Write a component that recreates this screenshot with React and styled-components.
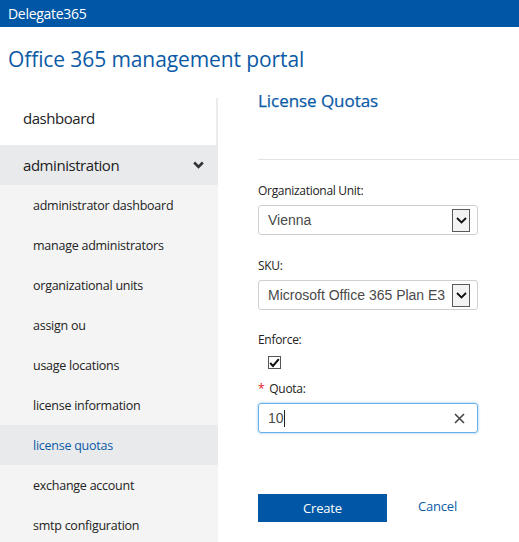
import React from "react";
import styled, { createGlobalStyle } from "styled-components";

const Global = createGlobalStyle`
  html, body { margin: 0; padding: 0; background: #fff; }
  body { font-family: "Open Sans", "Noto Sans", sans-serif; color: #222; }
  * { box-sizing: border-box; }
`;

const Page = styled.div`
  width: 519px;
  height: 542px;
  overflow: hidden;
  background: #fff;
`;

const TopBar = styled.div`
  height: 27px;
  background: #0057a5;
  color: #fff;
  display: flex;
  align-items: center;
  padding-left: 8px;
  font-size: 14px;
  letter-spacing: -0.3px;
`;

const TitleBar = styled.div`
  height: 61px;
  display: flex;
  align-items: flex-start;
  padding: 17px 0 0 8px;
`;

const Title = styled.h1`
  margin: 0;
  font-weight: 400;
  font-size: 21px;
  line-height: 30px;
  color: #0b5aa6;
  letter-spacing: -0.1px;
`;

const Main = styled.div`
  display: flex;
  align-items: flex-start;
`;

const Sidebar = styled.nav`
  width: 218px;
  margin-top: 10px;
  flex-shrink: 0;
`;

const TopItem = styled.div`
  height: ${(p) => p.$h}px;
  display: flex;
  align-items: center;
  justify-content: space-between;
  padding: 0 14px ${(p) => p.$pb || 0}px 23px;
  font-size: 15px;
  letter-spacing: -0.45px;
  color: #222;
  background: ${(p) => (p.$open ? "#e9eaec" : "#fff")};
  border-right: ${(p) => (p.$open ? "none" : "2px solid #ececec")};
`;

const SubItem = styled.div`
  height: 40px;
  display: flex;
  align-items: center;
  padding-left: 33px;
  font-size: 12.5px;
  letter-spacing: -0.25px;
  color: ${(p) => (p.$active ? "#0b5aa6" : "#222")};
  background: ${(p) => (p.$active ? "#e9eaec" : "#f4f4f4")};
`;

const Content = styled.section`
  flex: 1;
  padding-left: 40px;
  display: flex;
  flex-direction: column;
`;

const Heading = styled.h2`
  margin: 0;
  font-size: 17px;
  font-weight: 400;
  line-height: 26px;
  color: #0b5aa6;
  letter-spacing: -0.05px;
  -webkit-text-stroke: 0.25px #0b5aa6;
`;

const Rule = styled.hr`
  border: 0;
  border-top: 1px solid #e3e3e3;
  margin: 45px 0 0 0;
  height: 0;
`;

const Field = styled.div`
  display: flex;
  flex-direction: column;
  margin-top: ${(p) => p.$mt}px;
`;

const Label = styled.label`
  font-size: 12px;
  line-height: 17px;
  color: #222;
  letter-spacing: -0.3px;
`;

const Req = styled.span`
  color: #e02020;
  margin-right: 5px;
`;

const Box = styled.div`
  margin-top: ${(p) => p.$mt ?? 6}px;
  width: 220px;
  height: 30px;
  border: 1px solid ${(p) => (p.$focus ? "#66afe9" : "#cfcfcf")};
  border-radius: 3px;
  box-shadow: ${(p) => (p.$focus ? "0 0 3px rgba(102,175,233,.7)" : "none")};
  display: flex;
  align-items: center;
  padding: 0 7px 0 9px;
  font-family: "Liberation Sans", Arial, sans-serif;
  font-size: 14px;
  color: #4a4a4a;
`;

const BoxText = styled.span`
  flex: 1;
  white-space: nowrap;
  overflow: hidden;
`;

const Caret = styled.span`
  display: inline-block;
  width: 1px;
  height: 17px;
  background: #222;
  vertical-align: -4px;
`;

const Arrow = styled.span`
  width: 18px;
  height: 23px;
  border: 1px solid #5a5a5a;
  background: #f3f3f3;
  display: flex;
  align-items: center;
  justify-content: center;
  margin-left: 6px;
  flex-shrink: 0;
`;

const Clear = styled.span`
  width: 12px;
  display: flex;
  margin-right: 4px;
`;

const Check = styled.span`
  margin: 8px 0 0 10px;
  width: 13px;
  height: 13px;
  border: 1px solid #555;
  display: flex;
  align-items: center;
  justify-content: center;
  background: #fff;
`;

const Actions = styled.div`
  margin-top: 61px;
  display: flex;
  align-items: center;
`;

const Primary = styled.button`
  width: 129px;
  height: 28px;
  border: 0;
  background: #0057a5;
  color: #fff;
  font-family: "Open Sans", sans-serif;
  font-size: 13px;
  letter-spacing: -0.2px;
  padding: 0;
`;

const LinkBtn = styled.a`
  margin-left: 31px;
  font-size: 13px;
  color: #0b5aa6;
  letter-spacing: -0.2px;
  margin-top: -5px;
`;

const Chevron = () => (
  <svg width="11" height="8" viewBox="0 0 11 8">
    <path d="M1.2 1.5 L5.5 5.8 L9.8 1.5" fill="none" stroke="#333" strokeWidth="2.6" />
  </svg>
);

const SelectArrow = () => (
  <svg width="11" height="7" viewBox="0 0 11 7">
    <path d="M1 1 L5.5 5.5 L10 1" fill="none" stroke="#111" strokeWidth="1.8" />
  </svg>
);

const subs = [
  "administrator dashboard",
  "manage administrators",
  "organizational units",
  "assign ou",
  "usage locations",
  "license information",
  "license quotas",
  "exchange account",
  "smtp configuration",
];

export default function App() {
  return (
    <Page>
      <Global />
      <TopBar>Delegate365</TopBar>
      <TitleBar>
        <Title>Office 365 management portal</Title>
      </TitleBar>
      <Main>
        <Sidebar>
          <TopItem $h={47} $pb={7}>dashboard</TopItem>
          <TopItem $h={40} $open>
            administration
            <Chevron />
          </TopItem>
          {subs.map((s) => (
            <SubItem key={s} $active={s === "license quotas"}>
              {s}
            </SubItem>
          ))}
        </Sidebar>
        <Content>
          <Heading>License Quotas</Heading>
          <Rule />
          <Field $mt={22}>
            <Label>Organizational Unit:</Label>
            <Box>
              <BoxText>Vienna</BoxText>
              <Arrow>
                <SelectArrow />
              </Arrow>
            </Box>
          </Field>
          <Field $mt={22}>
            <Label>SKU:</Label>
            <Box>
              <BoxText>Microsoft Office 365 Plan E3</BoxText>
              <Arrow>
                <SelectArrow />
              </Arrow>
            </Box>
          </Field>
          <Field $mt={21}>
            <Label>Enforce:</Label>
            <Check>
              <svg width="11" height="10" viewBox="0 0 11 10">
                <path d="M1.2 5 L4 8 L9.8 1.2" fill="none" stroke="#111" strokeWidth="2" />
              </svg>
            </Check>
          </Field>
          <Field $mt={11}>
            <Label>
              <Req>*</Req>Quota:
            </Label>
            <Box $focus $mt={6}>
              <BoxText>
                10<Caret />
              </BoxText>
              <Clear>
                <svg width="11" height="11" viewBox="0 0 11 11">
                  <path d="M1 1 L10 10 M10 1 L1 10" stroke="#444" strokeWidth="1.6" />
                </svg>
              </Clear>
            </Box>
          </Field>
          <Actions>
            <Primary>Create</Primary>
            <LinkBtn>Cancel</LinkBtn>
          </Actions>
        </Content>
      </Main>
    </Page>
  );
}
